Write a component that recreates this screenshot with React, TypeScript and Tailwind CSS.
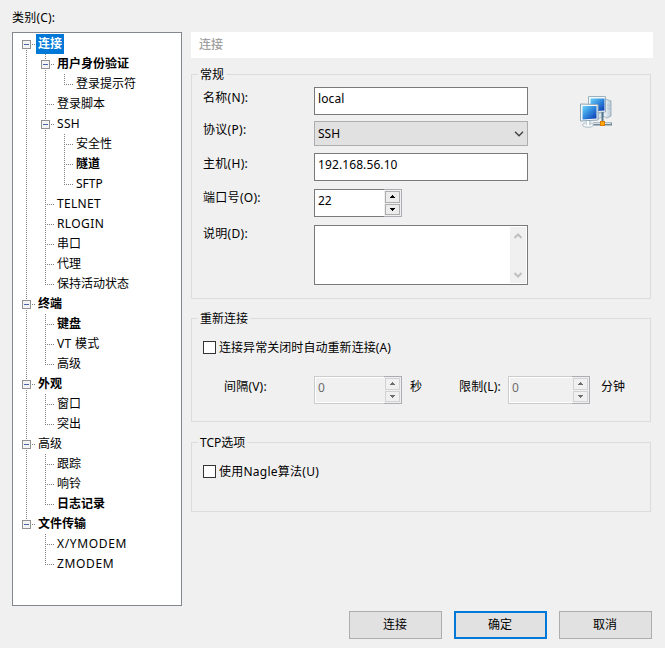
import clsx from 'clsx';
import type { ReactNode } from 'react';

type TreeNode = {
  label: string;
  bold?: boolean;
  selected?: boolean;
  className?: string;
  children?: TreeNode[];
};

const categories: TreeNode[] = [
  {
    label: '连接',
    selected: true,
    children: [
      { label: '用户身份验证', bold: true, children: [{ label: '登录提示符' }] },
      { label: '登录脚本' },
      {
        label: 'SSH',
        className: 'tracking-[.3px]',
        children: [{ label: '安全性' }, { label: '隧道', bold: true }, { label: 'SFTP' }],
      },
      { label: 'TELNET', className: 'tracking-[.3px]' },
      { label: 'RLOGIN', className: 'tracking-[.4px]' },
      { label: '串口' },
      { label: '代理' },
      { label: '保持活动状态' },
    ],
  },
  {
    label: '终端',
    bold: true,
    children: [
      { label: '键盘', bold: true },
      { label: 'VT 模式', className: 'tracking-[.3px]' },
      { label: '高级' },
    ],
  },
  { label: '外观', bold: true, children: [{ label: '窗口' }, { label: '突出' }] },
  {
    label: '高级',
    children: [{ label: '跟踪' }, { label: '响铃' }, { label: '日志记录', bold: true }],
  },
  {
    label: '文件传输',
    bold: true,
    children: [
      { label: 'X/YMODEM', className: 'tracking-[.65px]' },
      { label: 'ZMODEM', className: 'tracking-[.65px]' },
    ],
  },
];

function Guide({
  up,
  down,
  branch,
  toggle,
}: {
  up?: boolean;
  down?: boolean;
  branch?: boolean;
  toggle?: boolean;
}) {
  return (
    <svg width="19" height="20" className="shrink-0" shapeRendering="crispEdges" fill="none">
      <g stroke="#808080" strokeDasharray="1 1">
        {up && <path d="M9.5 0V11" />}
        {down && <path d="M9.5 10V20" />}
        {branch && <path d="M9 10.5H19" />}
      </g>
      {toggle && (
        <>
          <rect x="4" y="5" width="11" height="11" fill="#fff" />
          <rect x="5.5" y="6.5" width="8" height="8" fill="#f3f3f3" stroke="#919191" />
          <path d="M7 10.5H12" stroke="#4b63a7" />
        </>
      )}
    </svg>
  );
}

function TreeRows({
  nodes,
  trail = [],
}: {
  nodes: TreeNode[];
  // one flag per ancestor: does its vertical line go on below
  trail?: boolean[];
}) {
  return (
    <ul>
      {nodes.map((node, idx) => {
        const last = idx === nodes.length - 1;
        const first = idx === 0 && trail.length === 0;
        return (
          <li key={node.label}>
            <div className="flex h-5">
              {trail.map((open, depth) => (
                <Guide key={depth} up={open} down={open} />
              ))}
              <Guide up={!first} down={!last} branch toggle={!!node.children} />
              <span
                className={clsx(
                  'px-[2px] leading-[20px] whitespace-nowrap',
                  (node.bold || node.selected) && 'font-bold',
                  node.selected && 'bg-[#0078d7] text-white',
                  node.className
                )}
              >
                {node.label}
              </span>
            </div>
            {node.children && <TreeRows nodes={node.children} trail={[...trail, !last]} />}
          </li>
        );
      })}
    </ul>
  );
}

function Group({
  title,
  className,
  children,
}: {
  title: string;
  className?: string;
  children: ReactNode;
}) {
  return (
    <section className={clsx('relative w-[460px] border border-[#dcdcdc]', className)}>
      <h2 className="absolute -top-2 left-[6px] bg-[#f0f0f0] px-[2px] leading-4">{title}</h2>
      {children}
    </section>
  );
}

function Field({
  label,
  offset = 'mt-[3px]',
  children,
}: {
  label: string;
  offset?: string;
  children: ReactNode;
}) {
  return (
    <div className="flex items-start">
      <div className={clsx('w-[111px] leading-4 tracking-[.3px]', offset)}>{label}</div>
      {children}
    </div>
  );
}

function TextBox({ value }: { value: string }) {
  return (
    <div className="h-7 w-[214px] border border-[#7a7a7a] bg-white px-[3px] leading-[22px] tracking-[.1px]">
      {value}
    </div>
  );
}

function Spinner({
  value,
  disabled,
  width = 'w-[88px]',
}: {
  value: string;
  disabled?: boolean;
  width?: string;
}) {
  const button = clsx(
    'flex h-3 items-center justify-center border',
    disabled ? 'border-[#d2d2d2] bg-[#f0f0f0]' : 'border-[#adadad] bg-[#ececec]'
  );
  const arrow = disabled ? '#6d6d6d' : '#000';
  return (
    <div className={clsx('flex h-7', width)}>
      <div
        className={clsx(
          'flex-1 border border-r-0 px-[3px] leading-[22px]',
          disabled
            ? 'border-[#cccccc] bg-[#f0f0f0] text-[#6d6d6d] shadow-[inset_1px_1px_0_#fff,inset_0_-1px_0_#fff]'
            : 'border-[#7a7a7a] bg-white'
        )}
      >
        {value}
      </div>
      <div className="flex w-[18px] flex-col gap-px border border-l-0 border-[#abadb3] bg-[#f0f0f0] py-px pr-px pl-px">
        <div className={button}>
          <svg width="5" height="3" shapeRendering="crispEdges" fill={arrow}>
            <path d="M2 0h1v1h1v1h1v1H0V2h1V1h1z" />
          </svg>
        </div>
        <div className={button}>
          <svg width="5" height="3" shapeRendering="crispEdges" fill={arrow}>
            <path d="M0 0h5v1H4v1H3v1H2V2H1V1H0z" />
          </svg>
        </div>
      </div>
    </div>
  );
}

function CheckBox({ label, className }: { label: string; className?: string }) {
  return (
    <div className="flex items-start gap-[3px] leading-4">
      <span className="mt-px size-[13px] border border-[#333333] bg-white" />
      <span className={className}>{label}</span>
    </div>
  );
}

function PushButton({ label, primary }: { label: string; primary?: boolean }) {
  return (
    <button
      className={clsx(
        'h-7 w-[93px] bg-[#e1e1e1] text-center leading-4',
        primary ? 'border-2 border-[#0078d7] pr-px' : 'border border-[#adadad] pr-px'
      )}
    >
      {label}
    </button>
  );
}

function NetworkIcon() {
  return (
    <svg width="32" height="32" viewBox="0 0 32 32" fill="none">
      <defs>
        <linearGradient id="screen" x1="0" y1="0" x2="1" y2="1">
          <stop offset="0" stopColor="#6cd4fb" />
          <stop offset=".5" stopColor="#2f86dc" />
          <stop offset="1" stopColor="#0a35ae" />
        </linearGradient>
        <linearGradient id="tower" x1="0" y1="0" x2="1" y2="0">
          <stop offset="0" stopColor="#f8fbfd" />
          <stop offset="1" stopColor="#b9cad6" />
        </linearGradient>
      </defs>
      <path d="M25 3l6 2v15l-4 2-4-2z" fill="url(#tower)" stroke="#8da5b5" strokeWidth=".8" />
      <path d="M27 9l3 .5M27 12l3 .5" stroke="#a2b7c4" strokeWidth=".7" />
      <path d="M8.5.5h17v15.5l-17 1z" fill="#f2f7fa" stroke="#9db2bf" />
      <path d="M10.5 2.5h14v12l-14 1z" fill="url(#screen)" />
      <path d="M18 18l4-2v5l-4 2z" fill="#dce5eb" stroke="#8fa5b4" strokeWidth=".6" />
      <path d="M.5 8l17.5.5V24L.5 25z" fill="#f4f8fb" stroke="#8ca5b5" />
      <path d="M2.5 10h14v12.5l-14 1z" fill="url(#screen)" />
      <path d="M13 28h19" stroke="#708896" strokeWidth="3" />
      <path d="M13 27.5h18" stroke="#d5e0e6" />
      <ellipse cx="8" cy="29" rx="5.5" ry="2.3" fill="#f3f7f9" stroke="#9eb1bd" strokeWidth=".8" />
      <path d="M6 25h5v4H6z" fill="#c2d0da" />
      <path d="M7 25h2v4H7z" fill="#fff" />
      <path d="M22.5 16v10" stroke="#54798e" strokeWidth="2" />
      <rect x="20.5" y="25.5" width="4" height="4" fill="#ffaa09" stroke="#dc7d00" />
    </svg>
  );
}

export default function App() {
  return (
    <div className="flex h-[648px] w-[665px] flex-col bg-[#f0f0f0] font-['Noto_Sans','Noto_Sans_CJK_SC',sans-serif] text-[12px] text-black">
      <div className="mt-[10px] ml-3 h-[22px] leading-4 tracking-[.2px]">类别(C):</div>
      <div className="flex h-[574px] gap-[9px] pl-3">
        <nav className="w-[170px] border border-[#828790] bg-white pt-px pl-1">
          <TreeRows nodes={categories} />
        </nav>

        <main className="flex flex-col">
          <h1 className="h-[26px] w-[462px] bg-white pl-2 leading-[26px] font-medium text-[#a0a0a0]">
            连接
          </h1>

          <Group title="常规" className="mt-4 flex h-[225px] justify-between pt-3 pr-[38px] pl-[11px]">
            <div className="flex flex-col">
              <Field label="名称(N):">
                <TextBox value="local" />
              </Field>
              <div className="mt-[6px]">
                <Field label="协议(P):" offset="mt-px">
                  <div className="flex h-[25px] w-[214px] items-center justify-between border border-[#adadad] bg-[#e1e1e1] pr-[3px] pl-[3px]">
                    SSH
                    <svg width="10" height="6" fill="none" stroke="#404040" strokeWidth="1.3">
                      <path d="M1 .8l4 4 4-4" />
                    </svg>
                  </div>
                </Field>
              </div>
              <div className="mt-[7px]">
                <Field label="主机(H):">
                  <TextBox value="192.168.56.10" />
                </Field>
              </div>
              <div className="mt-2">
                <Field label="端口号(O):" offset="mt-px">
                  <Spinner value="22" />
                </Field>
              </div>
              <div className="mt-2">
                <Field label="说明(D):" offset="mt-px">
                  <div className="flex h-[60px] w-[214px] justify-end border border-[#7a7a7a] bg-white p-px">
                    <div className="flex w-4 flex-col items-center justify-between bg-[#f0f0f0] pt-[6px] pb-[5px]">
                      <svg width="8" height="6" fill="none" stroke="#bfbfbf" strokeWidth="2">
                        <path d="M.5 5L4 1.5 7.5 5" />
                      </svg>
                      <svg width="8" height="6" fill="none" stroke="#bfbfbf" strokeWidth="2">
                        <path d="M.5 1L4 4.5 7.5 1" />
                      </svg>
                    </div>
                  </div>
                </Field>
              </div>
            </div>
            <div className="mt-[9px]">
              <NetworkIcon />
            </div>
          </Group>

          <Group title="重新连接" className="mt-[19px] h-[104px] pt-[21px] pl-[11px]">
            <CheckBox label="连接异常关闭时自动重新连接(A)" className="tracking-[.06px]" />
            <div className="mt-5 flex items-start leading-4">
              <span className="mt-[3px] ml-[21px] w-[90px] tracking-[.2px]">间隔(V):</span>
              <Spinner value="0" disabled />
              <span className="mt-[3px] ml-2 w-[49px]">秒</span>
              <span className="mt-[3px] w-[49px] tracking-[.2px]">限制(L):</span>
              <Spinner value="0" disabled width="w-[82px]" />
              <span className="mt-[3px] ml-[11px]">分钟</span>
            </div>
          </Group>

          <Group title="TCP选项" className="mt-5 h-[70px] pt-[21px] pl-[11px]">
            <CheckBox label="使用Nagle算法(U)" className="tracking-[.25px]" />
          </Group>
        </main>
      </div>

      <footer className="mt-[5px] flex justify-end gap-3 pr-[13px]">
        <PushButton label="连接" />
        <PushButton label="确定" primary />
        <PushButton label="取消" />
      </footer>
    </div>
  );
}
